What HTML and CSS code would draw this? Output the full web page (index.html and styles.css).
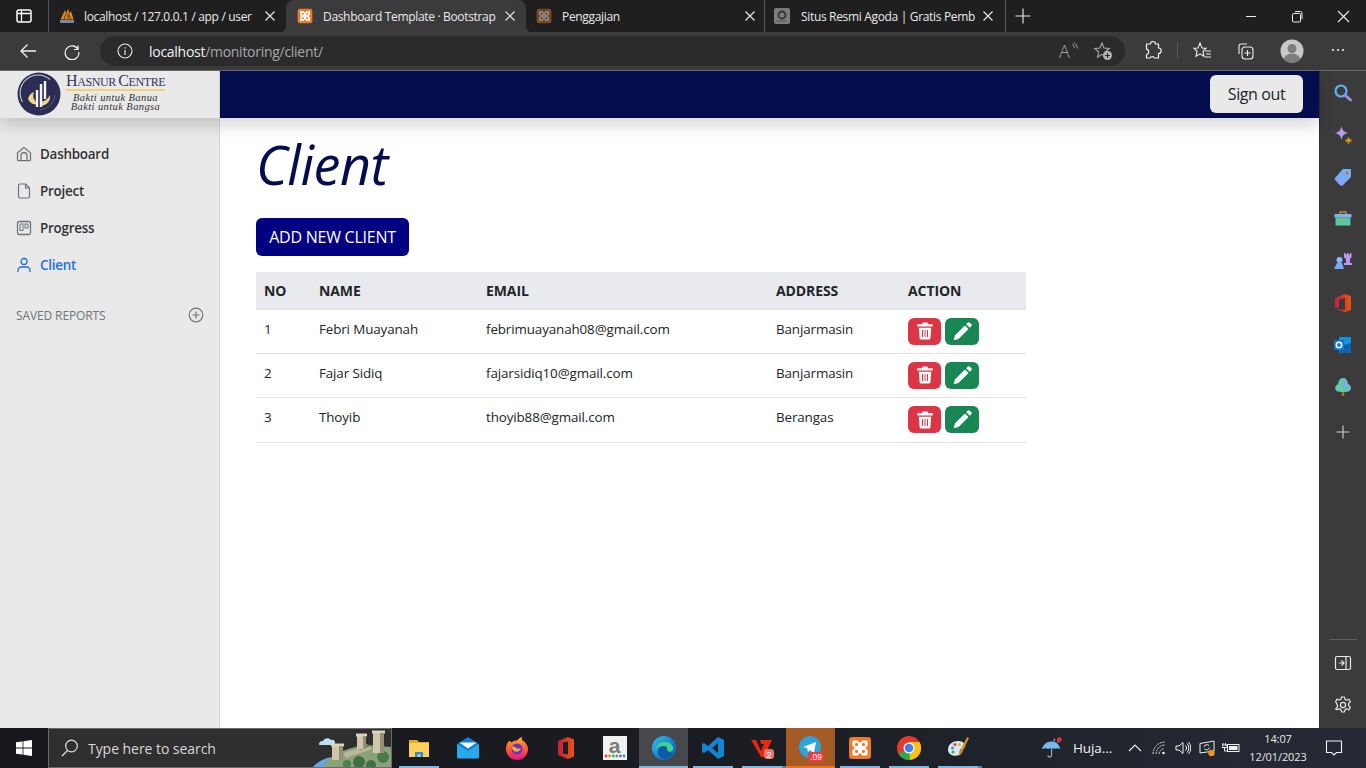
FILE: index.html
```html
<!DOCTYPE html>
<html lang="en">
<head>
<meta charset="utf-8">
<title>Client</title>
<link rel="stylesheet" href="styles.css">
</head>
<body>
<svg class="defs" width="0" height="0" aria-hidden="true">
  <defs>
    <linearGradient id="gBlue" x1="0" y1="0" x2="0" y2="1"><stop offset="0" stop-color="#6fb4ff"/><stop offset="1" stop-color="#8f9cf5"/></linearGradient>
    <linearGradient id="gEdge" x1="0" y1="0" x2="1" y2="1"><stop offset="0" stop-color="#35c1f1"/><stop offset=".6" stop-color="#0f7fcf"/><stop offset="1" stop-color="#0c59a4"/></linearGradient>
    <linearGradient id="gOff" x1="0" y1="0" x2="1" y2="0"><stop offset="0" stop-color="#c4213f"/><stop offset="1" stop-color="#e8540f"/></linearGradient>
    <symbol id="xampp" viewBox="0 0 24 24">
      <rect x="1" y="1" width="22" height="22" rx="3" fill="#ee7a2c"/>
      <path d="M5 4.500h4.500L12 7l2.500-2.500H19a.5.5 0 0 1 .5.5v5L17 12l2.500 2V19a.5.500 0 0 1-.5.5h-4.500L12 17l-2.500 2.500H5a.5.500 0 0 1-.5-.5v-5L7 12 4.500 10V5a.5.500 0 0 1 .5-.5z" fill="#fff"/>
      <rect x="7" y="7" width="3" height="3" rx="1" fill="#ee7a2c"/><rect x="14" y="7" width="3" height="3" rx="1" fill="#ee7a2c"/><rect x="7" y="14" width="3" height="3" rx="1" fill="#ee7a2c"/><rect x="14" y="14" width="3" height="3" rx="1" fill="#ee7a2c"/>
    </symbol>
    <symbol id="close" viewBox="0 0 12 12"><path d="M1.500 1.500l9 9M10.500 1.500l-9 9" stroke="#e8e8e8" stroke-width="1.200" fill="none"/></symbol>
    <symbol id="trash" viewBox="0 0 16 18">
      <path d="M5.600 0.500h4.800l.8 1.700H15a1 1 0 0 1 0 2.300H1a1 1 0 0 1 0-2.300h3.800zM1.800 5.700h12.400l-.8 10.500a1.600 1.600 0 0 1-1.600 1.400H4.200a1.600 1.600 0 0 1-1.600-1.400z" fill="#fff"/>
      <path d="M5.500 8v7M8 8v7M10.500 8v7" stroke="#dc3545" stroke-width="1" fill="none"/>
    </symbol>
    <symbol id="pencil" viewBox="0 0 18 18">
      <path d="M11.300 3.300l3.400 3.400-9.500 9.500-4.500 1.100 1.100-4.500zM12.500 2.100l1.400-1.400a1.500 1.500 0 0 1 2.100 0l1.300 1.300a1.500 1.500 0 0 1 0 2.100l-1.400 1.400z" fill="#fff"/>
    </symbol>
  </defs>
</svg>

<header class="tabstrip">
  <div class="strip-btn">
    <svg class="i16" viewBox="0 0 16 16"><rect x="1" y="2" width="14" height="12" rx="2" fill="none" stroke="#fff" stroke-width="1.500"/><path d="M5.500 2.500V13.500M1.500 5.500H14.500" stroke="#fff" stroke-width="1.300"/></svg>
  </div>
  <div class="tab tab-first">
    <svg class="i16" viewBox="0 0 16 16"><path d="M1.500 11.500L6 2l1 3.500L9 1l1.500 4.500L12 3l2.500 8.500z" fill="#e38a1d"/><path d="M5 11.500l2-6M9 11.500V5M12 11.500l-2-5" stroke="#3a2a10" stroke-width=".8"/><rect x="1" y="12" width="14" height="3" fill="#7d86a8"/></svg>
    <span class="tab-label">localhost / 127.0.0.1 / app / user</span>
    <svg class="tab-x"><use href="#close"/></svg>
  </div>
  <div class="tab tab-active">
    <svg class="i16"><use href="#xampp"/></svg>
    <span class="tab-label">Dashboard Template · Bootstrap</span>
    <svg class="tab-x"><use href="#close"/></svg>
  </div>
  <div class="tab tab-third">
    <svg class="i16 dim"><use href="#xampp"/></svg>
    <span class="tab-label">Penggajian</span>
    <svg class="tab-x"><use href="#close"/></svg>
  </div>
  <div class="tab tab-fourth">
    <svg class="i16" viewBox="0 0 16 16"><rect width="16" height="16" rx="2" fill="#7c7c7c"/><circle cx="8" cy="7" r="3.500" fill="none" stroke="#333" stroke-width="1.800"/><path d="M3 13h2M6 13h2M9 13h2M12 13h1" stroke="#444" stroke-width="1.200"/></svg>
    <span class="tab-label">Situs Resmi Agoda | Gratis Pemb</span>
    <svg class="tab-x"><use href="#close"/></svg>
  </div>
  <div class="new-tab">
    <svg class="i16" viewBox="0 0 16 16"><path d="M8 .5v15M.5 8h15" stroke="#eee" stroke-width="1.100"/></svg>
  </div>
  <div class="win-controls">
    <svg class="win-btn" viewBox="0 0 46 36"><path d="M18 16.500h10" stroke="#eee"/></svg>
    <svg class="win-btn" viewBox="0 0 46 36"><path d="M19.500 13.500h6a1 1 0 0 1 1 1v6.500a1 1 0 0 1-1 1h-6a1 1 0 0 1-1-1v-6.500a1 1 0 0 1 1-1zM21 11.500h5.500a1.500 1.500 0 0 1 1.500 1.500v6" fill="none" stroke="#eee"/></svg>
    <svg class="win-btn" viewBox="0 0 46 36"><path d="M18 11l11 11M29 11L18 22" stroke="#eee" stroke-width="1.100"/></svg>
  </div>
</header>

<div class="toolbar">
  <svg class="nav-btn" viewBox="0 0 18 18"><path d="M17 9H2M8.500 2.500L2 9l6.500 6.500" fill="none" stroke="#f2f2f2" stroke-width="1.300"/></svg>
  <svg class="nav-btn reload" viewBox="0 0 18 18"><path d="M15 3.500V7.500H11M15 7.300A6.900 6.900 0 1 0 15.900 10" fill="none" stroke="#f2f2f2" stroke-width="1.200"/></svg>
  <div class="address">
    <svg class="info" viewBox="0 0 16 16"><circle cx="8" cy="8" r="7" fill="none" stroke="#e5e5e5" stroke-width="1.100"/><path d="M8 7v5M8 4.200v1.300" stroke="#e5e5e5" stroke-width="1.200"/></svg>
    <span class="url"><span class="url-host">localhost</span>/monitoring/client/</span>
    <span class="address-tools">
      <span class="read-a">A<svg class="read-waves" viewBox="0 0 8 10"><path d="M1 2a5 5 0 0 1 2.500 4M3 .5a7.500 7.500 0 0 1 3.500 6" fill="none" stroke="#a8a8a8" stroke-width=".9"/></svg></span>
      <svg class="i20" viewBox="0 0 20 20"><path d="M9 2l2 5 5.300.4-4 3.400 1.200 5.200L9 13.300 4.500 16l1.200-5.200-4-3.400L7 7z" fill="none" stroke="#a8a8a8" stroke-width="1.100"/><circle cx="14.500" cy="14.500" r="4.500" fill="#b5b5b5"/><path d="M14.500 12v5M12 14.500h5" stroke="#2b2b2b" stroke-width="1.100"/></svg>
    </span>
  </div>
  <div class="toolbar-tools">
    <svg class="i20" viewBox="0 0 20 20"><path d="M7.500 3a2.500 2.500 0 0 1 5 0h3v4a2.500 2.500 0 0 1 0 5.500V17h-4a2.500 2.500 0 0 0-4.500 0H3.500v-3.500a2.700 2.700 0 0 0 0-5.300V3z" fill="none" stroke="#f0f0f0" stroke-width="1.200" stroke-linejoin="round"/></svg>
    <span class="tool-sep"></span>
    <svg class="i20" viewBox="0 0 20 20"><path d="M8 2l2 5 4 .3-3 3 1 5-4-2.500L4 15.300l1-5-3-3 4-.3zM13 10h6M14 13h5M13 16h6" fill="none" stroke="#f0f0f0" stroke-width="1.100"/></svg>
    <svg class="i20 collections" viewBox="0 0 20 20"><path d="M3 13V5a2 2 0 0 1 2-2h6" fill="none" stroke="#f0f0f0" stroke-width="1.100"/><rect x="6" y="6" width="11" height="12" rx="3" fill="none" stroke="#f0f0f0" stroke-width="1.100"/><path d="M11.500 9v6M8.500 12h6" stroke="#f0f0f0" stroke-width="1.100"/></svg>
    <svg class="avatar" viewBox="0 0 24 24"><defs><clipPath id="av"><circle cx="12" cy="12" r="11.500"/></clipPath></defs><circle cx="12" cy="12" r="11.500" fill="#c8c8c8"/><g clip-path="url(#av)"><circle cx="12" cy="9.500" r="4.500" fill="#7d7d7d"/><ellipse cx="12" cy="21" rx="8.500" ry="6.500" fill="#7d7d7d"/></g></svg>
    <svg class="more" viewBox="0 0 14 4"><circle cx="2" cy="2" r="1.100" fill="#f0f0f0"/><circle cx="7" cy="2" r="1.100" fill="#f0f0f0"/><circle cx="12" cy="2" r="1.100" fill="#f0f0f0"/></svg>
  </div>
</div>

<div class="viewport">
  <div class="page">
    <nav class="navbar">
      <div class="brand">
        <svg class="logo-mark" viewBox="0 0 44 46">
          <circle cx="22" cy="23" r="21.500" fill="#2b2d55"/>
          <path d="M5.500 31A18 18 0 0 1 33 8.500" fill="none" stroke="#c9cad6" stroke-width="1.100"/>
          <path d="M38 24c-1 8-7 14-15 15" fill="none" stroke="#55577a" stroke-width="1"/>
          <path d="M11 28c.5-3 3-6 6-7-1 3-1 5 0 7l3 5c-4 1-7-1-9-5z" fill="#f2d58a"/>
          <path d="M33 24c1 6-3 10-9 11v-4c4-1 7-3 9-7z" fill="#f2d58a"/>
          <path d="M20 36V19M24 36V13M28 28V10" stroke="#f4f4f4" stroke-width="2.400"/>
        </svg>
        <div class="logo-text">
          <div class="logo-name"><span class="logo-cap">H</span>ASNUR <span class="logo-cap">C</span>ENTRE</div>
          <div class="logo-tag">Bakti untuk Banua</div>
          <div class="logo-tag logo-tag-two">Bakti untuk Bangsa</div>
        </div>
      </div>
      <a class="signout">Sign out</a>
    </nav>
    <div class="page-body">
      <aside class="sidebar">
        <ul class="side-nav">
          <li class="side-item">
            <svg class="side-icon" viewBox="0 0 16 16"><path d="M1.500 6.700L8 1.500l6.500 5.200v6.800a1.200 1.200 0 0 1-1.200 1.200H2.700a1.200 1.200 0 0 1-1.200-1.200zM5 14.500V9.500a3 3 0 0 1 6 0v5" fill="none" stroke="#6f7479" stroke-width="1.300"/></svg>
            Dashboard
          </li>
          <li class="side-item">
            <svg class="side-icon" viewBox="0 0 16 16"><path d="M9.500 1H4a1.500 1.500 0 0 0-1.500 1.500v11A1.500 1.500 0 0 0 4 15h8a1.500 1.500 0 0 0 1.500-1.500V5zM9.500 1v4h4" fill="none" stroke="#6f7479" stroke-width="1.200" stroke-linejoin="round"/></svg>
            Project
          </li>
          <li class="side-item">
            <svg class="side-icon" viewBox="0 0 16 16"><rect x="1.500" y="1.500" width="13" height="13" rx="1.500" fill="none" stroke="#6f7479" stroke-width="1.300"/><rect x="4" y="4" width="3" height="6.500" fill="none" stroke="#6f7479"/><rect x="9" y="4" width="3" height="4" fill="none" stroke="#6f7479"/></svg>
            Progress
          </li>
          <li class="side-item side-active">
            <svg class="side-icon" viewBox="0 0 16 16"><circle cx="8" cy="4.500" r="3" fill="none" stroke="#2470dc" stroke-width="1.300"/><path d="M2 15v-1.500A3.500 3.500 0 0 1 5.500 10h5a3.500 3.500 0 0 1 3.500 3.500V15" fill="none" stroke="#2470dc" stroke-width="1.300"/></svg>
            Client
          </li>
        </ul>
        <h6 class="side-heading">
          <span>SAVED REPORTS</span>
          <svg class="side-plus" viewBox="0 0 16 16"><circle cx="8" cy="8" r="6.800" fill="none" stroke="#6c757d" stroke-width="1.200"/><path d="M8 4.500v7M4.500 8h7" stroke="#6c757d" stroke-width="1.200"/></svg>
        </h6>
      </aside>
      <main class="content">
        <h1 class="title">Client</h1>
        <a class="add-btn">ADD NEW CLIENT</a>
        <table class="clients">
          <thead>
            <tr><th class="c-no">NO</th><th class="c-name">NAME</th><th class="c-email">EMAIL</th><th class="c-addr">ADDRESS</th><th class="c-act">ACTION</th></tr>
          </thead>
          <tbody>
            <tr>
              <td>1</td><td>Febri Muayanah</td><td>febrimuayanah08@gmail.com</td><td>Banjarmasin</td>
              <td><div class="actions"><a class="act act-del"><svg class="act-trash"><use href="#trash"/></svg></a><a class="act act-edit"><svg class="act-pencil"><use href="#pencil"/></svg></a></div></td>
            </tr>
            <tr>
              <td>2</td><td>Fajar Sidiq</td><td>fajarsidiq10@gmail.com</td><td>Banjarmasin</td>
              <td><div class="actions"><a class="act act-del"><svg class="act-trash"><use href="#trash"/></svg></a><a class="act act-edit"><svg class="act-pencil"><use href="#pencil"/></svg></a></div></td>
            </tr>
            <tr>
              <td>3</td><td>Thoyib</td><td>thoyib88@gmail.com</td><td>Berangas</td>
              <td><div class="actions"><a class="act act-del"><svg class="act-trash"><use href="#trash"/></svg></a><a class="act act-edit"><svg class="act-pencil"><use href="#pencil"/></svg></a></div></td>
            </tr>
          </tbody>
        </table>
      </main>
    </div>
  </div>
  <aside class="edge-rail">
    <div class="rail-top">
      <svg class="rail-icon" viewBox="0 0 20 20"><circle cx="8" cy="8" r="5.500" fill="none" stroke="#5fb0f5" stroke-width="2.200"/><path d="M12.500 12.500L17.500 17" stroke="#a78cf0" stroke-width="2.800" stroke-linecap="round"/></svg>
      <svg class="rail-icon" viewBox="0 0 20 20"><path d="M8.500 1c.8 4.500 2.500 6.200 7 7-4.500.8-6.200 2.500-7 7-.8-4.500-2.500-6.200-7-7 4.500-.8 6.200-2.500 7-7z" fill="#b89bf5"/><path d="M15.500 12.500v6M12.500 15.500h6" stroke="#e09a20" stroke-width="1.800"/></svg>
      <svg class="rail-icon" viewBox="0 0 20 20"><path d="M10 2h7a1 1 0 0 1 1 1v7l-8.500 8.500a1.500 1.500 0 0 1-2 0L2 13a1.500 1.500 0 0 1 0-2z" fill="url(#gBlue)"/><circle cx="14" cy="6" r="1.500" fill="#b57a1a"/></svg>
      <svg class="rail-icon" viewBox="0 0 20 20"><path d="M7 5V3h6v2" fill="none" stroke="#b8923c" stroke-width="1.300"/><rect x="1.500" y="5" width="17" height="3.500" fill="#7eb4f5"/><rect x="2.500" y="8.500" width="15" height="8" fill="#56c8a8"/><rect x="9" y="8" width="2" height="2.500" fill="#d89a20"/></svg>
      <svg class="rail-icon" viewBox="0 0 20 20"><circle cx="6.500" cy="9" r="3" fill="#8ab8ff"/><path d="M4 12h5l2 6H1z" fill="#76a8f8"/><path d="M11 2h1.500v1.500H14V2h1.500v1.500H17V2h1.500v4.500L17 8v4h2v2h-8v-2h2V8l-2-1.500z" fill="#bd97f2"/></svg>
      <svg class="rail-icon" viewBox="0 0 20 20"><path d="M2 5l10-4 6 2v14l-6 2-10-3 10 1V5L6 6.500v8L2 15z" fill="url(#gOff)"/></svg>
      <svg class="rail-icon" viewBox="0 0 20 20"><rect x="6" y="2" width="12" height="16" rx="1" fill="#1490df"/><path d="M6 11l12-3v10H7z" fill="#0a64b4"/><rect x="1" y="5" width="10" height="10" rx="1" fill="#0f78d4"/><circle cx="6" cy="10" r="2.700" fill="none" stroke="#fff" stroke-width="1.500"/></svg>
      <svg class="rail-icon" viewBox="0 0 20 20"><path d="M10 1c3 0 4.500 3 5 6 2 1 3.500 3 2.500 5.500S13 15 10 15s-6.500 0-7.500-2.500S3 8 5 7c.5-3 2-6 5-6z" fill="#63c9a8"/><path d="M10 1c3 0 4.500 3 5 6 2 1 3.500 3 2.500 5.500-3 1-5 0-7.500-1z" fill="#6fb7d8"/><rect x="8.800" y="15" width="2.400" height="4" fill="#a8742a"/></svg>
      <svg class="rail-icon rail-add" viewBox="0 0 20 20"><path d="M10 3.500v13M3.500 10h13" stroke="#d0d0d0" stroke-width="1.100"/></svg>
    </div>
    <div class="rail-bottom">
      <span class="rail-sep"></span>
      <svg class="rail-icon" viewBox="0 0 20 20"><rect x="2.500" y="3.500" width="15" height="13" rx="1.500" fill="none" stroke="#e8e8e8" stroke-width="1.200"/><path d="M13 4v12M6 10h5M8.500 7.500L11 10l-2.500 2.500" fill="none" stroke="#e8e8e8" stroke-width="1.200"/></svg>
      <svg class="rail-icon" viewBox="0 0 20 20"><circle cx="10" cy="10" r="2.600" fill="none" stroke="#e8e8e8" stroke-width="1.200"/><path d="M8.500 2h3l.5 2.400 1.700.8 2.200-1 1.500 2.600-1.800 1.600v2.200l1.800 1.600-1.500 2.600-2.200-1-1.700.8-.5 2.400h-3l-.5-2.400-1.700-.8-2.200 1L2.600 14l1.800-1.600v-2.200L2.600 6.600l1.500-2.600 2.200 1 1.700-.8z" fill="none" stroke="#e8e8e8" stroke-width="1.200" stroke-linejoin="round"/></svg>
    </div>
  </aside>
</div>

<footer class="taskbar">
  <div class="start">
    <svg class="win-logo" viewBox="0 0 16 16"><path d="M0 2.300l6.600-.9v6.200H0zM7.400 1.300L16 0v7.600H7.400zM0 8.400h6.600v6.200L0 13.700zM7.400 8.400H16V16l-8.600-1.200z" fill="#fff"/></svg>
  </div>
  <div class="search">
    <svg class="search-icon" viewBox="0 0 18 18"><circle cx="10.500" cy="7" r="5.800" fill="none" stroke="#e0e0e0" stroke-width="1.200"/><path d="M6.500 11.500L1 17" stroke="#e0e0e0" stroke-width="1.300"/></svg>
    <span class="search-text">Type here to search</span>
    <svg class="search-art" viewBox="0 0 80 40">
      <path d="M8 15c0-2 2-3.500 4-3 1-3 6-4 8-1 3-1 4 1 4 2.500S23 16 21 16H10c-1.500 0-2-.3-2-1z" fill="#bde0f2"/>
      <path d="M0 40C6 33 14 28 24 28l16 12z" fill="#63a8e8"/>
      <path d="M12 36C22 24 38 18 56 16l24 2v22H18z" fill="#8aa376"/>
      <path d="M32 24l26-8 3 4-26 9z" fill="#bcb79a"/>
      <path d="M44 18l10-4 6 3-10 4z" fill="#5f8f55"/>
      <circle cx="48" cy="33" r="6" fill="#3f6f45"/><circle cx="72" cy="28" r="6" fill="#4a7a4c"/><circle cx="60" cy="36" r="5" fill="#426f45"/><circle cx="36" cy="35" r="4" fill="#4f7f50"/>
      <path d="M21 17h11v14H21z" fill="#cfc7ac"/><path d="M20 14.500h13v3H20z" fill="#ddd5bb"/><path d="M28 17h4v14h-4z" fill="#968f79"/>
      <path d="M46 7h9v13h-9z" fill="#cfc7ac"/><path d="M45 4.500h11v3H45z" fill="#ddd5bb"/><path d="M52 7h3v13h-3z" fill="#968f79"/>
      <path d="M62 4h11v20H62z" fill="#cfc7ac"/><path d="M61 1.500h13v3H61z" fill="#ddd5bb"/><path d="M69 4h4v20h-4z" fill="#968f79"/>
    </svg>
  </div>
  <div class="apps">
    <div class="app app-open">
      <svg class="app-icon" viewBox="0 0 24 24"><path d="M2 4h8l2 2h10v3H2z" fill="#e8a91c"/><rect x="2" y="7" width="20" height="14" fill="#fcd25c"/><path d="M8 21v-5h8v5h-2.500v-2.500h-3V21z" fill="#2a8ee0"/></svg>
    </div>
    <div class="app">
      <svg class="app-icon" viewBox="0 0 24 24"><path d="M1 8l11-7 11 7v14H1z" fill="#0f7fd6"/><path d="M1 8l11 7 11-7v13a1.500 1.500 0 0 1-1.500 1.500h-19A1.500 1.500 0 0 1 1 21z" fill="#27a9ec"/><path d="M3.500 6.500h17L12 12.500z" fill="#fff"/></svg>
    </div>
    <div class="app">
      <svg class="app-icon" viewBox="0 0 24 24"><defs><linearGradient id="gFx" x1="0" y1="0" x2="0" y2="1"><stop offset="0" stop-color="#ffb11f"/><stop offset=".6" stop-color="#ff4f3f"/><stop offset="1" stop-color="#e31587"/></linearGradient></defs><path d="M4 5c1 0 2 1 2.500 1.500C8 5 10 4.300 12 4.500 13 3 15 1.500 17 1c-.5 1.500 0 3 .7 3.500C21 6.500 23 10 23 13a11 11 0 0 1-22 0c0-3 1-6 3-8z" fill="url(#gFx)"/><circle cx="12" cy="13" r="5.500" fill="#6b2fd1"/><path d="M7 11c2-1 3 0 4 1s3 1 5 0c-1 3-4 5-7 3-1-1-2-2-2-4z" fill="#ffb11f"/></svg>
    </div>
    <div class="app">
      <svg class="app-icon" viewBox="0 0 24 24"><path d="M4 5l10-4 6 2.500v17L14 23 4 19z" fill="url(#gOff)"/><path d="M9 6.500l5-1v13l-5-1z" fill="#1c1d23"/></svg>
    </div>
    <div class="app">
      <span class="azure-tile"><span class="azure-a">a</span><svg class="azure-dots" viewBox="0 0 22 4"><circle cx="2" cy="2" r="1.400" fill="#e13a3a"/><circle cx="5.600" cy="2" r="1.400" fill="#e88a22"/><circle cx="9.200" cy="2" r="1.400" fill="#3fae4a"/><circle cx="12.800" cy="2" r="1.400" fill="#2fae8c"/><circle cx="16.400" cy="2" r="1.400" fill="#9a4fd8"/><circle cx="20" cy="2" r="1.400" fill="#2f8fe0"/></svg></span>
    </div>
    <div class="app app-open app-current">
      <svg class="app-icon" viewBox="0 0 24 24"><circle cx="12" cy="12" r="12" fill="url(#gEdge)"/><path d="M3 15C4 8 10 5 15 6c4 1 7 4 6 8-1 2-4 2-6 1 1-3-1-5-4-5s-7 2-8 5z" fill="#3fd08a"/><path d="M6 16c0-4 3-6 6-6 2 0 3 1 3 3 0 3 3 4 6 3-2 5-6 8-10 7-3-1-5-4-5-7z" fill="#0d5aa5"/></svg>
    </div>
    <div class="app app-open">
      <svg class="app-icon" viewBox="0 0 24 24"><path d="M17 1l6 3v16l-6 3L7 14l-4 3-2-1V8l2-1 4 3zM17 7l-6 5 6 5z" fill="#0f87d6" fill-rule="evenodd"/></svg>
    </div>
    <div class="app app-open app-stack">
      <svg class="app-icon" viewBox="0 0 24 24"><path d="M1 4h5l5 11 3-7h-3L10 4h12l-8 17h-3z" fill="#e8280f"/><rect x="14" y="13" width="10" height="10" rx="3" fill="#e8736c"/><text class="badge-2" x="19" y="21.500">2</text></svg>
    </div>
    <div class="app app-open app-flash">
      <svg class="app-icon" viewBox="0 0 24 24"><circle cx="11" cy="11" r="11" fill="#2ba4de"/><path d="M4 11l13-5-2 11-4-3-2 2-1-4z" fill="#fff"/></svg>
      <span class="tg-badge">.09</span>
    </div>
    <div class="app app-open">
      <svg class="app-icon"><use href="#xampp"/></svg>
    </div>
    <div class="app app-open">
      <svg class="app-icon" viewBox="0 0 24 24"><circle cx="12" cy="12" r="12" fill="#e33b2e"/><path d="M12 12L1.600 18A12 12 0 0 0 15 23.600z" fill="#2da94f"/><path d="M12 6h10.500A12 12 0 0 1 13 24z" fill="#fbc116"/><circle cx="12" cy="12" r="5.500" fill="#fff"/><circle cx="12" cy="12" r="4.300" fill="#3d82f0"/></svg>
    </div>
    <div class="app app-open app-stack">
      <svg class="app-icon" viewBox="0 0 24 24"><path d="M2 14C2 8 7 5 12 5c5 0 8 3 7 6-1 2-4 1-5 3s1 4-1 5c-4 2-11 0-11-5z" fill="#dfe6ee"/><circle cx="6.500" cy="12" r="1.500" fill="#3f8fe0"/><circle cx="9" cy="8.500" r="1.500" fill="#e23c3c"/><circle cx="13.500" cy="8.500" r="1.500" fill="#e8b21c"/><circle cx="7" cy="16" r="1.500" fill="#3fae4a"/><path d="M21 1l2 1-7 15-3 3 .5-4z" fill="#c98b3a"/></svg>
    </div>
  </div>
  <div class="tray">
    <div class="weather">
      <svg class="weather-icon" viewBox="0 0 24 24"><path d="M1 13C3 7 8 5 12 5s8 3 9 8c-2-1-4-1-5 0-1-1-3-1-4 0-1-1-3-1-4 0-2-1-4-1-7 0z" fill="#78b9ee"/><path d="M11.500 13v7a2 2 0 0 1-4 0" fill="none" stroke="#aaa" stroke-width="1.300"/><path d="M14 5l1-3M18 6l1-3" stroke="#5fa4e6" stroke-width="1.500"/><circle cx="20" cy="3" r="2.700" fill="#d8352a"/></svg>
      <span>Huja...</span>
    </div>
    <svg class="tray-icon" viewBox="0 0 16 16"><path d="M2 11l6-6 6 6" fill="none" stroke="#f0f0f0" stroke-width="1.100"/></svg>
    <svg class="tray-icon" viewBox="0 0 16 16"><path d="M2 14A12 12 0 0 1 14 2M5 14a9 9 0 0 1 9-9M8 14a6 6 0 0 1 5-5.500" fill="none" stroke="#d8d8d8" stroke-width="1" stroke-dasharray="2 .7"/><circle cx="12.500" cy="13" r="1.300" fill="#f0f0f0"/></svg>
    <svg class="tray-icon" viewBox="0 0 16 16"><path d="M1 6h3l4-3.500v11L4 10H1zM10.500 5.500a3.500 3.500 0 0 1 0 5M12 3.500a6.500 6.500 0 0 1 0 9M13.500 2a9 9 0 0 1 0 12" fill="none" stroke="#f0f0f0"/></svg>
    <svg class="tray-icon" viewBox="0 0 16 16"><path d="M1 3.500L15 1v10l-14 2z" fill="none" stroke="#f0f0f0"/><path d="M5 7a3 3 0 0 1 5-1.500M10.500 7.500a3 3 0 0 1-5 1.500" fill="none" stroke="#f0f0f0"/><circle cx="12.500" cy="13" r="3.200" fill="#f7911e"/></svg>
    <svg class="tray-icon tray-battery" viewBox="0 0 18 16"><path d="M1 3v2M3.500 3v2M0 5h5v2.500H0zM2.500 7.500V11H5" fill="none" stroke="#f0f0f0"/><rect x="5.500" y="4.500" width="11.500" height="7" fill="none" stroke="#f0f0f0"/><rect x="7" y="6" width="8.500" height="4" fill="#f0f0f0"/></svg>
    <div class="clock"><span>14:07</span><span>12/01/2023</span></div>
    <svg class="notif" viewBox="0 0 18 18"><path d="M1.500 2h15v11.500h-5L9 16l-2.500-2.500h-5z" fill="none" stroke="#f2f2f2" stroke-width="1.100"/></svg>
  </div>
</footer>
</body>
</html>
```

FILE: styles.css
```css
* { box-sizing: border-box; }
html, body { margin: 0; padding: 0; }
body {
  width: 1366px;
  height: 768px;
  overflow: hidden;
  display: flex;
  flex-direction: column;
  font-family: "Open Sans", "Noto Sans", sans-serif;
  color: #212529;
  background: #fff;
}
.defs { position: absolute; }
svg { display: block; flex: none; }
.i16 { width: 16px; height: 16px; }
.i20 { width: 20px; height: 20px; }
.dim { opacity: .45; }

/* tab strip */
.tabstrip { height: 36px; background: linear-gradient(#1f1f1f 32px, #3b3b3b 32px); display: flex; align-items: flex-start; flex: none; }
.strip-btn { width: 48px; height: 32px; display: flex; align-items: center; justify-content: center; }
.tab {
  display: flex; align-items: center; height: 32px; padding-left: 10px; padding-right: 9px;
  gap: 10px; color: #eaeaea; font-size: 12px; letter-spacing: -.33px;
  position: relative;
}
.tab-first { width: 238px; border-left: 1px solid #555; gap: 9px; padding-right: 10px; }
.tab-active { width: 240px; height: 36px; background: #3b3b3b; border-radius: 8px 8px 0 0; padding-left: 11px; padding-right: 10px; padding-bottom: 4px; }
.tab-active::before, .tab-active::after { content: ""; position: absolute; bottom: 4px; width: 6px; height: 6px; }
.tab-active::before { left: -6px; background: radial-gradient(circle at 0 0, transparent 6px, #3b3b3b 6.500px); }
.tab-active::after { right: -6px; background: radial-gradient(circle at 100% 0, transparent 6px, #3b3b3b 6.500px); }
.tab-third { width: 238px; padding-left: 10px; padding-right: 8px; }
.tab-fourth { width: 241px; padding-left: 9px; padding-right: 11px; border-left: 1px solid #555; gap: 11px; }
.tab-label { flex: 1; min-width: 0; white-space: nowrap; }
.tab-x { width: 12px; height: 12px; }
.new-tab { width: 34px; height: 32px; display: flex; align-items: center; justify-content: center; border-left: 1px solid #555; }
.win-controls { margin-left: auto; display: flex; }
.win-btn { width: 46px; height: 36px; }

/* toolbar */
.toolbar { height: 35px; background: #3b3b3b; display: flex; align-items: flex-start; flex: none; border-bottom: 1px solid #6a6a6a; padding-left: 19px; }
.nav-btn { width: 18px; height: 18px; margin-top: 6px; }
.reload { margin-left: 26px; }
.address {
  width: 1025px; height: 30px; margin-left: 19px; background: #2b2b2b; border-radius: 15px;
  display: flex; align-items: center; padding: 0 12px 0 17px; color: #a8a8a8; font-size: 14px; letter-spacing: -.28px;
}
.info { width: 16px; height: 16px; }
.url { margin-left: 16px; }
.url-host { color: #f2f2f2; }
.address-tools { margin-left: auto; display: flex; align-items: center; gap: 17px; }
.read-a { position: relative; color: #a8a8a8; font-size: 18px; line-height: 22px; font-weight: 300; width: 18px; margin-right: -1px; margin-left: -4px; }
.read-waves { position: absolute; width: 8px; height: 10px; left: 12px; top: 2px; }
.toolbar-tools { display: flex; align-items: center; height: 30px; margin-left: 18px; }
.tool-sep { width: 1px; height: 16px; background: #5d5d5d; margin: 0 14px; }
.collections { margin-left: 24px; }
.avatar { width: 24px; height: 24px; margin-left: 24px; }
.more { width: 14px; height: 4px; margin-left: 27px; margin-top: -2px; }

/* viewport */
.viewport { flex: 1; min-height: 0; display: flex; }
.page { width: 1319px; display: flex; flex-direction: column; background: #fff; min-height: 0; }
.navbar {
  height: 47px; flex: none; background: #030d4d; display: flex; justify-content: space-between; align-items: flex-start;
  padding-right: 16px; box-shadow: 0 8px 16px rgba(0,0,0,.15); position: relative; z-index: 2;
}
.brand { width: 220px; height: 47px; background: #e9e9e9; display: flex; align-items: flex-start; padding: 0 0 0 17px; border-right: 1px solid #d0d0d0; }
.logo-mark { width: 44px; height: 46px; }
.logo-text { margin-left: 5px; width: 99px; color: #2b2d55; font-family: "Liberation Serif", serif; }
.logo-name { font-size: 12px; line-height: 16px; padding-top: 2px; border-bottom: 2px solid #f5d36c; white-space: nowrap; letter-spacing: -.42px; height: 20px; color: #33365e; }
.logo-cap { font-size: 16px; }
.logo-tag { font-size: 10.500px; line-height: 9px; font-style: italic; letter-spacing: .4px; text-align: center; padding-top: 2px; white-space: nowrap; color: #333; }
.logo-tag-two { padding-top: 0; }
.signout { width: 93px; height: 38px; margin-top: 4px; background: #e9e9e9; border-radius: 6px; color: #212529; font-size: 16px; letter-spacing: -.4px; display: flex; align-items: center; justify-content: center; }

.page-body { flex: 1; min-height: 0; display: flex; }
.sidebar { width: 220px; flex: none; background: #e9e9e9; border-right: 1px solid #d4d4d4; padding-top: 17px; }
.side-nav { list-style: none; margin: 0; padding: 0; }
.side-item { height: 37px; display: flex; align-items: center; gap: 8px; padding-left: 16px; font-size: 13.400px; font-weight: 600; letter-spacing: -.22px; color: #333; }
.side-icon { width: 16px; height: 16px; }
.side-active { color: #2470dc; }
.side-heading { margin: 20px 0 0; padding: 0 15px 0 16px; height: 24px; display: flex; justify-content: space-between; align-items: center; font-size: 12px; font-weight: 400; letter-spacing: -.12px; color: #6c757d; }
.side-plus { width: 16px; height: 16px; }

.content { flex: 1; min-width: 0; padding: 0 36px; }
.title { margin: 15px 0 23px 0; color: #030d4d; font-size: 54px; line-height: 62px; font-style: italic; font-weight: 500; height: 62px; letter-spacing: -.5px; }
.add-btn { display: flex; align-items: center; justify-content: center; width: 153px; height: 38px; background: #000080; border-radius: 6px; color: #fff; font-size: 16px; letter-spacing: -.25px; }
.clients { margin-top: 16px; width: 770px; border-collapse: collapse; table-layout: fixed; font-size: 13.400px; letter-spacing: -.12px; }
.clients th { height: 37px; background: #e9eaee; text-align: left; padding: 0 8px; font-weight: 700; font-size: 14px; letter-spacing: -.1px; border-bottom: 1px solid #dee2e6; color: #212529; }
.clients td { height: 44px; padding: 0 8px 5px; border-bottom: 1px solid #dee2e6; color: #212529; }
.clients tr:last-child td { height: 45px; }
.c-no { width: 55px; }
.c-name { width: 167px; }
.c-email { width: 290px; }
.c-addr { width: 132px; }
.c-act { width: 126px; }
.actions { display: flex; gap: 4px; padding-top: 5px; }
.act { height: 27px; border-radius: 6px; display: flex; align-items: center; justify-content: center; }
.act-del { width: 33px; background: #dc3545; }
.act-edit { width: 34px; background: #198754; }
.act-trash { width: 16px; height: 18px; }
.act-pencil { width: 19px; height: 19px; }

/* Edge rail */
.edge-rail { width: 47px; background: #3b3b3b; border-left: 1px solid #2f2f2f; display: flex; flex-direction: column; justify-content: space-between; align-items: center; padding-right: 1px; }
.rail-top { display: flex; flex-direction: column; align-items: center; gap: 22px; padding-top: 12px; }
.rail-add { margin-top: 3px; }
.rail-bottom { display: flex; flex-direction: column; align-items: center; gap: 22px; padding-bottom: 13px; }
.rail-icon { width: 20px; height: 20px; }
.rail-sep { display: block; width: 28px; height: 1px; background: #606060; margin-bottom: -9px; }

/* taskbar */
.taskbar { height: 40px; flex: none; display: flex; background: linear-gradient(90deg, #16181d 0%, #1a1c21 50%, #252a36 100%); color: #f2f2f2; }
.start { width: 48px; display: flex; align-items: center; justify-content: center; }
.win-logo { width: 16px; height: 16px; }
.search { width: 344px; height: 40px; background: #2f2f2f; border: 1px solid #6a6a6a; display: flex; align-items: center; position: relative; overflow: hidden; padding-left: 12px; }
.search-icon { width: 18px; height: 18px; }
.search-text { margin-left: 9px; font-size: 14px; letter-spacing: -.05px; color: #d8d8d8; }
.search-art { position: absolute; right: 0; top: 0; width: 80px; height: 40px; }
.apps { display: flex; margin-left: 2px; }
.app { width: 49px; height: 40px; display: flex; align-items: center; justify-content: center; position: relative; }
.app-icon { width: 24px; height: 24px; }
.app-open::after { content: ""; position: absolute; bottom: 0; left: 5px; right: 4px; height: 2px; background: #76b9ed; }
.app-current { background: #47484c; }
.app-current::after { left: 0; right: 0; }
.app-flash { background: #a35a25; }
.app-flash::after { left: 0; right: 0; background: #f7700f; }
.app-stack::before { content: ""; position: absolute; bottom: 0; right: 0; width: 9px; height: 2px; background: #4e86a8; }
.azure-tile { width: 24px; height: 24px; background: #f1f1f1; display: flex; flex-direction: column; align-items: center; justify-content: flex-end; padding-bottom: 2px; }
.azure-a { color: #7c7c7c; font-size: 21px; line-height: 17px; font-family: "Liberation Sans", sans-serif; font-weight: 700; }
.azure-dots { width: 22px; height: 4px; }
.badge-2 { font-family: "Liberation Sans", sans-serif; font-size: 9px; fill: #fff; text-anchor: middle; }
.tg-badge { position: absolute; left: 22px; top: 24px; width: 16px; height: 10px; background: #ef3a3e; border-radius: 2px; color: #fff; font-size: 8.500px; line-height: 10px; text-align: center; font-family: "Liberation Sans", sans-serif; }
.tray { margin-left: auto; display: flex; align-items: center; width: 326px; flex: none; }
.weather { width: 83px; display: flex; align-items: center; font-size: 13.500px; letter-spacing: -.1px; padding-left: 1px; gap: 10px; }
.weather-icon { width: 22px; height: 22px; }
.tray-icon { width: 16px; height: 16px; margin: 0 4px; }
.tray-battery { width: 18px; margin: 0 3px; }
.clock { width: 70px; display: flex; flex-direction: column; align-items: center; font-size: 11px; line-height: 18px; color: #e8e8e8; letter-spacing: -.1px; }
.notif { width: 18px; height: 18px; margin-left: 12px; }
```
